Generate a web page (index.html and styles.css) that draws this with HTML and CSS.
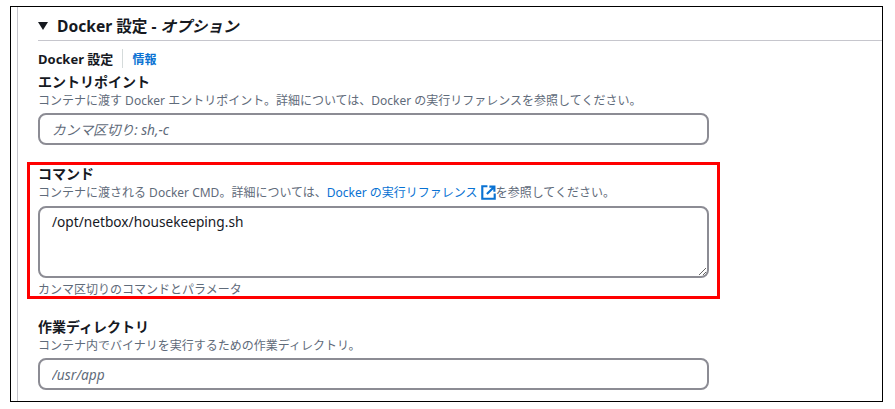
FILE: index.html
```html
<!DOCTYPE html>
<html lang="ja">
<head>
    <meta charset="UTF-8">
    <title>Docker 設定</title>
    <link rel="stylesheet" href="styles.css">
</head>
<body>
    <div class="frame">
        <div class="section">
            <h2 class="section-title"><span class="caret"></span>Docker 設定 - <em>オプション</em></h2>
            <div class="sub-title">
                <span class="sub-name">Docker 設定</span>
                <a class="info-link" href="#">情報</a>
            </div>

            <div class="field field-entry">
                <label class="field-label">エントリポイント</label>
                <p class="field-desc">コンテナに渡す Docker エントリポイント。詳細については、Docker の実行リファレンスを参照してください。</p>
                <input class="text-input" type="text" placeholder="カンマ区切り: sh,-c">
            </div>

            <div class="highlight">
                <label class="field-label">コマンド</label>
                <p class="field-desc">コンテナに渡される Docker CMD。詳細については、<a class="doc-link" href="#">Docker の実行リファレンス
                    <svg class="ext-icon" viewBox="0 0 14 14" width="15" height="15" aria-hidden="true">
                        <path d="M6 1.2H1.2v11.6h11.6V8" fill="none" stroke="#0972d3" stroke-width="2"/>
                        <path d="M5.5 8.5 11.5 2.5M7.8 1.5h4.7v4.7" fill="none" stroke="#0972d3" stroke-width="2"/>
                    </svg></a>を参照してください。</p>
                <textarea class="text-area">/opt/netbox/housekeeping.sh</textarea>
                <p class="field-hint">カンマ区切りのコマンドとパラメータ</p>
            </div>

            <div class="field field-workdir">
                <label class="field-label">作業ディレクトリ</label>
                <p class="field-desc">コンテナ内でバイナリを実行するための作業ディレクトリ。</p>
                <input class="text-input" type="text" placeholder="/usr/app">
            </div>
        </div>
    </div>
</body>
</html>
```

FILE: styles.css
```css
* {
    box-sizing: border-box;
}
html, body {
    height: 100%;
}
body {
    margin: 0;
    background-color: #fff;
    color: #16191f;
    font-family: "Noto Sans", "Noto Sans CJK JP", sans-serif;
    overflow: hidden;
}
.frame {
    width: 873px;
    height: 396px;
    margin: 6px 0 0 10px;
    border: 1px solid #000;
    overflow: hidden;
}
.section {
    height: 100%;
    margin-left: 6px;
    padding-left: 20px;
    border-left: 1px solid #c6c6cd;
}
.section-title {
    display: flex;
    align-items: center;
    height: 34px;
    margin: 0;
    padding-top: 4px;
    border-bottom: 1px solid #c6c6cd;
    font-size: 15.6px;
    font-weight: 700;
    white-space: pre;
}
.section-title em {
    font-style: italic;
}
.caret {
    width: 0;
    height: 0;
    margin-right: 9px;
    border-left: 5px solid transparent;
    border-right: 5px solid transparent;
    border-top: 8px solid #16191f;
}
.sub-title {
    display: flex;
    align-items: center;
    height: 17px;
    margin-top: 9px;
    font-size: 13px;
    font-weight: 700;
}
.sub-name {
    padding-right: 9px;
    border-right: 1px solid #d5dbdb;
}
.info-link {
    margin-left: 9px;
    font-size: 12px;
    color: #0972d3;
    text-decoration: none;
}
.field-label {
    display: block;
    font-size: 14px;
    line-height: 18px;
    font-weight: 700;
}
.field-desc {
    margin: 0;
    font-size: 12px;
    line-height: 20px;
    color: #5f6b7a;
}
.field-hint {
    margin: 4px 0 0;
    font-size: 12px;
    line-height: 16px;
    color: #5f6b7a;
}
.doc-link {
    color: #0972d3;
    text-decoration: none;
}
.ext-icon {
    vertical-align: -3px;
}
.field-entry {
    margin-top: 6px;
}
.text-input, .text-area {
    display: block;
    width: 671px;
    border: 2px solid #8c8c94;
    border-radius: 8px;
    background-color: #fff;
    color: #16191f;
    font-family: "Noto Sans", "Noto Sans CJK JP", sans-serif;
    font-size: 13.7px;
}
.text-input {
    height: 32px;
    margin-top: 2px;
    padding: 0 12px;
}
.text-input::placeholder {
    color: #5f6b7a;
    font-style: italic;
    opacity: 1;
}
.highlight {
    width: 693px;
    height: 137px;
    margin: 17px 0 0 -11px;
    padding: 0 0 0 8px;
    border: 3px solid #f00;
}
.text-area {
    height: 72px;
    margin-top: 3px;
    padding: 4px 12px;
    line-height: 20px;
    resize: vertical;
}
.field-workdir {
    margin-top: 19px;
}
```
